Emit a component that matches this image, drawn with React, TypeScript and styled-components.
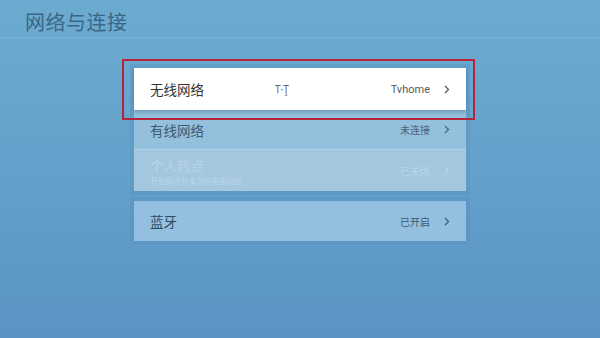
import React from "react";
import styled, { createGlobalStyle } from "styled-components";

const Global = createGlobalStyle`
  html, body { margin: 0; padding: 0; }
  body { font-family: "Noto Sans CJK SC", "Noto Sans", sans-serif; }
`;

const Screen = styled.div`
  width: 600px;
  height: 338px;
  overflow: hidden;
  box-sizing: border-box;
  background: linear-gradient(180deg, #6cabd0 0%, #65a2cb 45%, #5b94c3 100%);
  display: flex;
  flex-direction: column;
`;

const Header = styled.div`
  height: 38px;
  box-sizing: border-box;
  padding: 8px 0 0 25px;
  border-bottom: 1px solid rgba(150, 198, 226, 0.3);
`;

const Title = styled.h1`
  margin: 0;
  font-size: 20px;
  line-height: 28px;
  font-weight: 400;
  color: #3b6683;
  letter-spacing: 0.5px;
`;

const Content = styled.div`
  display: flex;
  flex-direction: column;
  align-items: center;
  gap: 10px;
  padding-top: 30px;
`;

const Group = styled.div`
  width: 332px;
  display: flex;
  flex-direction: column;
  box-shadow: 0 0 0 4px rgba(80, 140, 185, 0.25);
`;

const Row = styled.div<{ $variant: "focus" | "normal" | "disabled" | "bt"; $h: number }>`
  position: relative;
  height: ${(p) => p.$h}px;
  box-sizing: border-box;
  display: flex;
  align-items: center;
  padding: 0 16px 0 16px;
  background: ${(p) =>
    p.$variant === "focus"
      ? "#ffffff"
      : p.$variant === "normal"
      ? "#93c0dc"
      : p.$variant === "disabled"
      ? "#a2c7df"
      : "#93bfe0"};
  box-shadow: ${(p) => (p.$variant === "focus" ? "0 2px 4px rgba(40,80,110,0.35)" : "none")};
  border-bottom: ${(p) => (p.$variant === "normal" ? "1px solid rgba(190,220,238,0.7)" : "none")};
  z-index: ${(p) => (p.$variant === "focus" ? 1 : 0)};
`;

const Labels = styled.div`
  display: flex;
  flex-direction: column;
  flex: 1;
`;

const Label = styled.span<{ $tone: string }>`
  font-size: 13.5px;
  line-height: 18px;
  color: ${(p) => p.$tone};
`;

const Sub = styled.span`
  font-size: 7.7px;
  line-height: 10px;
  color: #bcd6e8;
  margin-top: 2px;
`;

const Middle = styled.span`
  position: absolute;
  left: 141px;
  top: 14px;
  font-family: "Noto Sans", sans-serif;
  font-size: 10px;
  color: #666;
`;

const Value = styled.span<{ $tone: string; $latin?: boolean }>`
  font-size: ${(p) => (p.$latin ? "11px" : "10px")};
  font-family: ${(p) => (p.$latin ? '"Roboto", "Noto Sans", sans-serif' : "inherit")};
  color: ${(p) => p.$tone};
  margin-right: 14px;
`;

const Chevron = ({ color }: { color: string }) => (
  <svg width="6" height="9" viewBox="0 0 6 9">
    <path d="M1 1 L4.5 4.5 L1 8" fill="none" stroke={color} strokeWidth="1.2" />
  </svg>
);

const FocusFrame = styled.div`
  position: absolute;
  left: -12px;
  right: -9px;
  top: -9px;
  bottom: -10px;
  border: 2.5px solid #b8233c;
  pointer-events: none;
`;

export default function App() {
  return (
    <Screen>
      <Global />
      <Header>
        <Title>网络与连接</Title>
      </Header>
      <Content>
        <Group>
          <Row $variant="focus" $h={42}>
            <Labels>
              <Label $tone="#333">无线网络</Label>
            </Labels>
            <Middle>T·Ţ</Middle>
            <Value $tone="#5a5a5a" $latin>Tvhome</Value>
            <Chevron color="#555" />
            <FocusFrame />
          </Row>
          <Row $variant="normal" $h={40}>
            <Labels>
              <Label $tone="#3d5b72">有线网络</Label>
            </Labels>
            <Value $tone="#4a6478">未连接</Value>
            <Chevron color="#4a6478" />
          </Row>
          <Row $variant="disabled" $h={41}>
            <Labels>
              <Label $tone="#bbd5e7">个人热点</Label>
              <Sub>开启即可共享您的电视网络</Sub>
            </Labels>
            <Value $tone="#bbd5e7">已关闭</Value>
            <Chevron color="#bbd5e7" />
          </Row>
        </Group>
        <Group>
          <Row $variant="bt" $h={40}>
            <Labels>
              <Label $tone="#2f4a5e">蓝牙</Label>
            </Labels>
            <Value $tone="#3d5a70">已开启</Value>
            <Chevron color="#3d5a70" />
          </Row>
        </Group>
      </Content>
    </Screen>
  );
}
